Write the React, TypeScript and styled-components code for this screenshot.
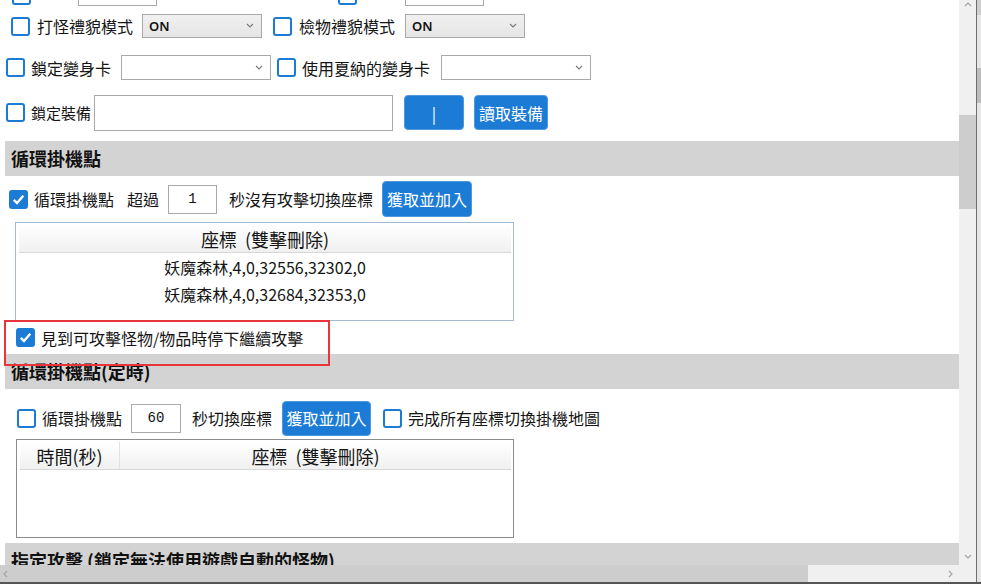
import React from "react";
import styled, { createGlobalStyle } from "styled-components";

const BLUE = "#1b7bd5";
const FONT = `"Noto Sans CJK TC", "Noto Sans", sans-serif`;

const GlobalStyle = createGlobalStyle`
  html, body { margin: 0; padding: 0; background: #fff; overflow: hidden; }
  body { font-family: ${FONT}; color: #111; }
  * { box-sizing: border-box; }
`;

/* ---------- window frame ---------- */

const Frame = styled.div`
  width: 981px;
  height: 584px;
  display: grid;
  grid-template-columns: 959px 17px 1px 4px;
  grid-template-rows: 565px 17px 2px;
  background: #fff;
`;

const Viewport = styled.div`
  grid-column: 1;
  grid-row: 1;
  overflow: hidden;
`;

const Content = styled.div`
  display: flex;
  flex-direction: column;
  width: 959px;
  margin-top: -17px;
`;

/* ---------- scrollbars ---------- */

const VScroll = styled.div`
  grid-column: 2;
  grid-row: 1;
  background: #f0f0f0;
  display: flex;
  flex-direction: column;
`;

const HScroll = styled.div`
  grid-column: 1;
  grid-row: 2;
  background: #f0f0f0;
  display: flex;
`;

const Corner = styled.div`
  grid-column: 2;
  grid-row: 2;
  background: #f0f0f0;
`;

const ArrowCell = styled.div<{ $w: number; $h: number; $bg?: string }>`
  width: ${(p) => p.$w}px;
  height: ${(p) => p.$h}px;
  flex-shrink: 0;
  display: flex;
  align-items: center;
  justify-content: center;
  background: ${(p) => p.$bg ?? "transparent"};
  color: #a3a3a3;
`;

const Spacer = styled.div`
  flex: 1;
`;

const VThumb = styled.div`
  margin-top: 105px;
  height: 94px;
  background: #cdcdcd;
`;

const HThumb = styled.div`
  width: 796px;
  background: #cdcdcd;
`;

const Divider = styled.div`
  grid-column: 3;
  grid-row: 1 / 3;
  background: #6e6e6e;
`;

const OuterBar = styled.div`
  grid-column: 4;
  grid-row: 1 / 3;
  background: #e6e6e6;
  display: flex;
  flex-direction: column;
`;

const OuterCap = styled.div`
  height: 15px;
  background: #cfcfcf;
`;

const OuterThumb = styled.div`
  margin-top: 53px;
  height: 35px;
  background: #bdbdbd;
`;

const BottomLine = styled.div`
  grid-column: 1 / 5;
  grid-row: 3;
  background: #555;
`;

const Chevron = ({ dir }: { dir: "up" | "down" | "left" | "right" }) => {
  const pts = {
    up: "1,5 4,2 7,5",
    down: "1,2 4,5 7,2",
    left: "5,1 2,4 5,7",
    right: "2,1 5,4 2,7",
  }[dir];
  return (
    <svg width="8" height="8" viewBox="0 0 8 8">
      <polyline points={pts} fill="none" stroke="currentColor" strokeWidth="1.1" />
    </svg>
  );
};

/* ---------- form parts ---------- */

const Row = styled.div<{ $mt?: number; $h: number; $pl: number; $raised?: boolean }>`
  display: flex;
  align-items: center;
  flex-shrink: 0;
  margin-top: ${(p) => p.$mt ?? 0}px;
  height: ${(p) => p.$h}px;
  padding-left: ${(p) => p.$pl}px;
  position: ${(p) => (p.$raised ? "relative" : "static")};
  z-index: ${(p) => (p.$raised ? 1 : "auto")};
`;

const Highlight = styled.div`
  position: absolute;
  left: 4px;
  top: -1px;
  width: 326px;
  height: 46px;
  border: 2px solid #e8353b;
  pointer-events: none;
`;

const Box = styled.span<{ $checked?: boolean; $ml?: number }>`
  width: 19px;
  height: 19px;
  flex-shrink: 0;
  margin-left: ${(p) => p.$ml ?? 0}px;
  border: 2px solid ${BLUE};
  border-radius: 3px;
  background: ${(p) => (p.$checked ? BLUE : "#fff")};
  display: inline-flex;
  align-items: center;
  justify-content: center;
`;

const Text = styled.span<{ $ml?: number; $size?: number }>`
  margin-left: ${(p) => p.$ml ?? 0}px;
  font-size: ${(p) => p.$size ?? 16}px;
  line-height: 20px;
  white-space: nowrap;
  color: #151515;
`;

const Select = styled.div<{ $w: number; $h: number; $ml?: number; $filled?: boolean }>`
  width: ${(p) => p.$w}px;
  height: ${(p) => p.$h}px;
  margin-left: ${(p) => p.$ml ?? 0}px;
  flex-shrink: 0;
  border: 1px solid #a9a9a9;
  background: ${(p) => (p.$filled ? "linear-gradient(#f0f0f0, #e5e5e5)" : "#fff")};
  display: flex;
  align-items: center;
  justify-content: space-between;
  padding: 0 7px 0 6px;
  color: #7a7a7a;
`;

const SelectValue = styled.span`
  font-family: "Noto Sans", sans-serif;
  font-size: 13px;
  font-weight: 600;
  color: #111;
`;

const Input = styled.div<{ $w: number; $h: number; $ml?: number }>`
  width: ${(p) => p.$w}px;
  height: ${(p) => p.$h}px;
  margin-left: ${(p) => p.$ml ?? 0}px;
  flex-shrink: 0;
  border: 1px solid #a9a9a9;
  background: #fff;
  display: flex;
  align-items: center;
  justify-content: center;
  font-family: "Liberation Mono", "DejaVu Sans Mono", monospace;
  font-size: 14px;
  color: #111;
`;

const Button = styled.button<{ $w: number; $h: number; $ml?: number }>`
  width: ${(p) => p.$w}px;
  height: ${(p) => p.$h}px;
  margin-left: ${(p) => p.$ml ?? 0}px;
  flex-shrink: 0;
  padding: 0;
  border: 1px solid #4f98de;
  border-radius: 4px;
  background: ${BLUE};
  color: #fff;
  font-family: ${FONT};
  font-size: 16px;
  line-height: 20px;
`;

const SectionHeader = styled.div<{ $mt?: number }>`
  margin-top: ${(p) => p.$mt ?? 0}px;
  margin-left: 5px;
  height: 35px;
  flex-shrink: 0;
  background: #d3d3d3;
  display: flex;
  align-items: center;
  padding: 0 0 2px 6px;
  font-size: 18px;
  font-weight: 700;
  color: #111;
  white-space: nowrap;
`;

/* ---------- list tables ---------- */

const Table = styled.div<{ $mt?: number; $ml: number; $w: number; $border: string }>`
  margin-top: ${(p) => p.$mt ?? 0}px;
  margin-left: ${(p) => p.$ml}px;
  width: ${(p) => p.$w}px;
  height: 99px;
  flex-shrink: 0;
  border: 1px solid ${(p) => p.$border};
  padding: 2px 2px 0 3px;
  background: #fff;
`;

const TableHead = styled.div<{ $cols: string }>`
  display: grid;
  grid-template-columns: ${(p) => p.$cols};
  height: 28px;
  background: linear-gradient(#ffffff, #f0f0f0);
  border-bottom: 1px solid #d8d8d8;
`;

const HeadCell = styled.div<{ $divider?: boolean }>`
  display: flex;
  align-items: center;
  justify-content: center;
  font-size: 18px;
  white-space: nowrap;
  color: #151515;
  border-right: ${(p) => (p.$divider ? "1px solid #e2e2e2" : "none")};
`;

const TableRow = styled.div`
  height: 27px;
  display: flex;
  align-items: center;
  justify-content: center;
  font-size: 16px;
  color: #151515;
  white-space: nowrap;
`;

const Check = () => (
  <svg width="13" height="13" viewBox="0 0 13 13">
    <path d="M1.8 6.8 L5 10 L11.3 2.8" fill="none" stroke="#fff" strokeWidth="2.4" />
  </svg>
);

export default function App() {
  const routes = ["妖魔森林,4,0,32556,32302,0", "妖魔森林,4,0,32684,32353,0"];

  return (
    <>
      <GlobalStyle />
      <Frame>
        <Viewport>
          <Content>
            <Row $h={24} $pl={12}>
              <Box />
              <Input $w={79} $h={22} $ml={47} />
              <Box $ml={181} />
              <Input $w={79} $h={22} $ml={48} />
            </Row>

            <Row $mt={7} $h={24} $pl={11}>
              <Box />
              <Text $ml={7}>打怪禮貌模式</Text>
              <Select $w={120} $h={24} $ml={9} $filled>
                <SelectValue>ON</SelectValue>
                <Chevron dir="down" />
              </Select>
              <Box $ml={11} />
              <Text $ml={7}>檢物禮貌模式</Text>
              <Select $w={120} $h={24} $ml={10} $filled>
                <SelectValue>ON</SelectValue>
                <Chevron dir="down" />
              </Select>
            </Row>

            <Row $mt={17} $h={25} $pl={6}>
              <Box />
              <Text $ml={6}>鎖定變身卡</Text>
              <Select $w={150} $h={25} $ml={10}>
                <span />
                <Chevron dir="down" />
              </Select>
              <Box $ml={6} />
              <Text $ml={6}>使用夏納的變身卡</Text>
              <Select $w={150} $h={25} $ml={11}>
                <span />
                <Chevron dir="down" />
              </Select>
            </Row>

            <Row $mt={14} $h={37} $pl={6}>
              <Box />
              <Text $ml={6} $size={15}>鎖定裝備</Text>
              <Input $w={299} $h={36} $ml={3} />
              <Button $w={60} $h={35} $ml={11}>|</Button>
              <Button $w={74} $h={35} $ml={10}>讀取裝備</Button>
            </Row>

            <SectionHeader $mt={10}>循環掛機點</SectionHeader>

            <Row $mt={5} $h={36} $pl={9}>
              <Box $checked>
                <Check />
              </Box>
              <Text $ml={6}>循環掛機點</Text>
              <Text $ml={13}>超過</Text>
              <Input $w={49} $h={29} $ml={9}>1</Input>
              <Text $ml={12}>秒沒有攻擊切換座標</Text>
              <Button $w={90} $h={36} $ml={9}>獲取並加入</Button>
            </Row>

            <Table $mt={5} $ml={15} $w={499} $border="#9fbad6">
              <TableHead $cols="1fr">
                <HeadCell>座標&nbsp;&nbsp;(雙擊刪除)</HeadCell>
              </TableHead>
              {routes.map((r) => (
                <TableRow key={r}>{r}</TableRow>
              ))}
            </Table>

            <Row $h={33} $pl={16} $raised>
              <Box $checked>
                <Check />
              </Box>
              <Text $ml={6}>見到可攻擊怪物/物品時停下繼續攻擊</Text>
              <Highlight />
            </Row>

            <SectionHeader>循環掛機點(定時)</SectionHeader>

            <Row $mt={11} $h={36} $pl={17}>
              <Box />
              <Text $ml={6}>循環掛機點</Text>
              <Input $w={50} $h={29} $ml={9}>60</Input>
              <Text $ml={11}>秒切換座標</Text>
              <Button $w={89} $h={35} $ml={10}>獲取並加入</Button>
              <Box $ml={12} />
              <Text $ml={6}>完成所有座標切換掛機地圖</Text>
            </Row>

            <Table $mt={3} $ml={16} $w={498} $border="#8c8c8c">
              <TableHead $cols="100px 1fr">
                <HeadCell $divider>時間(秒)</HeadCell>
                <HeadCell>座標&nbsp;&nbsp;(雙擊刪除)</HeadCell>
              </TableHead>
            </Table>

            <SectionHeader $mt={5}>指定攻擊 (鎖定無法使用遊戲自動的怪物)</SectionHeader>
          </Content>
        </Viewport>

        <VScroll>
          <ArrowCell $w={17} $h={10}>
            <Chevron dir="up" />
          </ArrowCell>
          <VThumb />
          <Spacer />
          <ArrowCell $w={17} $h={17}>
            <Chevron dir="down" />
          </ArrowCell>
        </VScroll>

        <HScroll>
          <ArrowCell $w={12} $h={17} $bg="#cdcdcd">
            <Chevron dir="left" />
          </ArrowCell>
          <HThumb />
          <Spacer />
          <ArrowCell $w={17} $h={17}>
            <Chevron dir="right" />
          </ArrowCell>
        </HScroll>

        <Corner />
        <Divider />
        <OuterBar>
          <OuterCap />
          <OuterThumb />
        </OuterBar>
        <BottomLine />
      </Frame>
    </>
  );
}
